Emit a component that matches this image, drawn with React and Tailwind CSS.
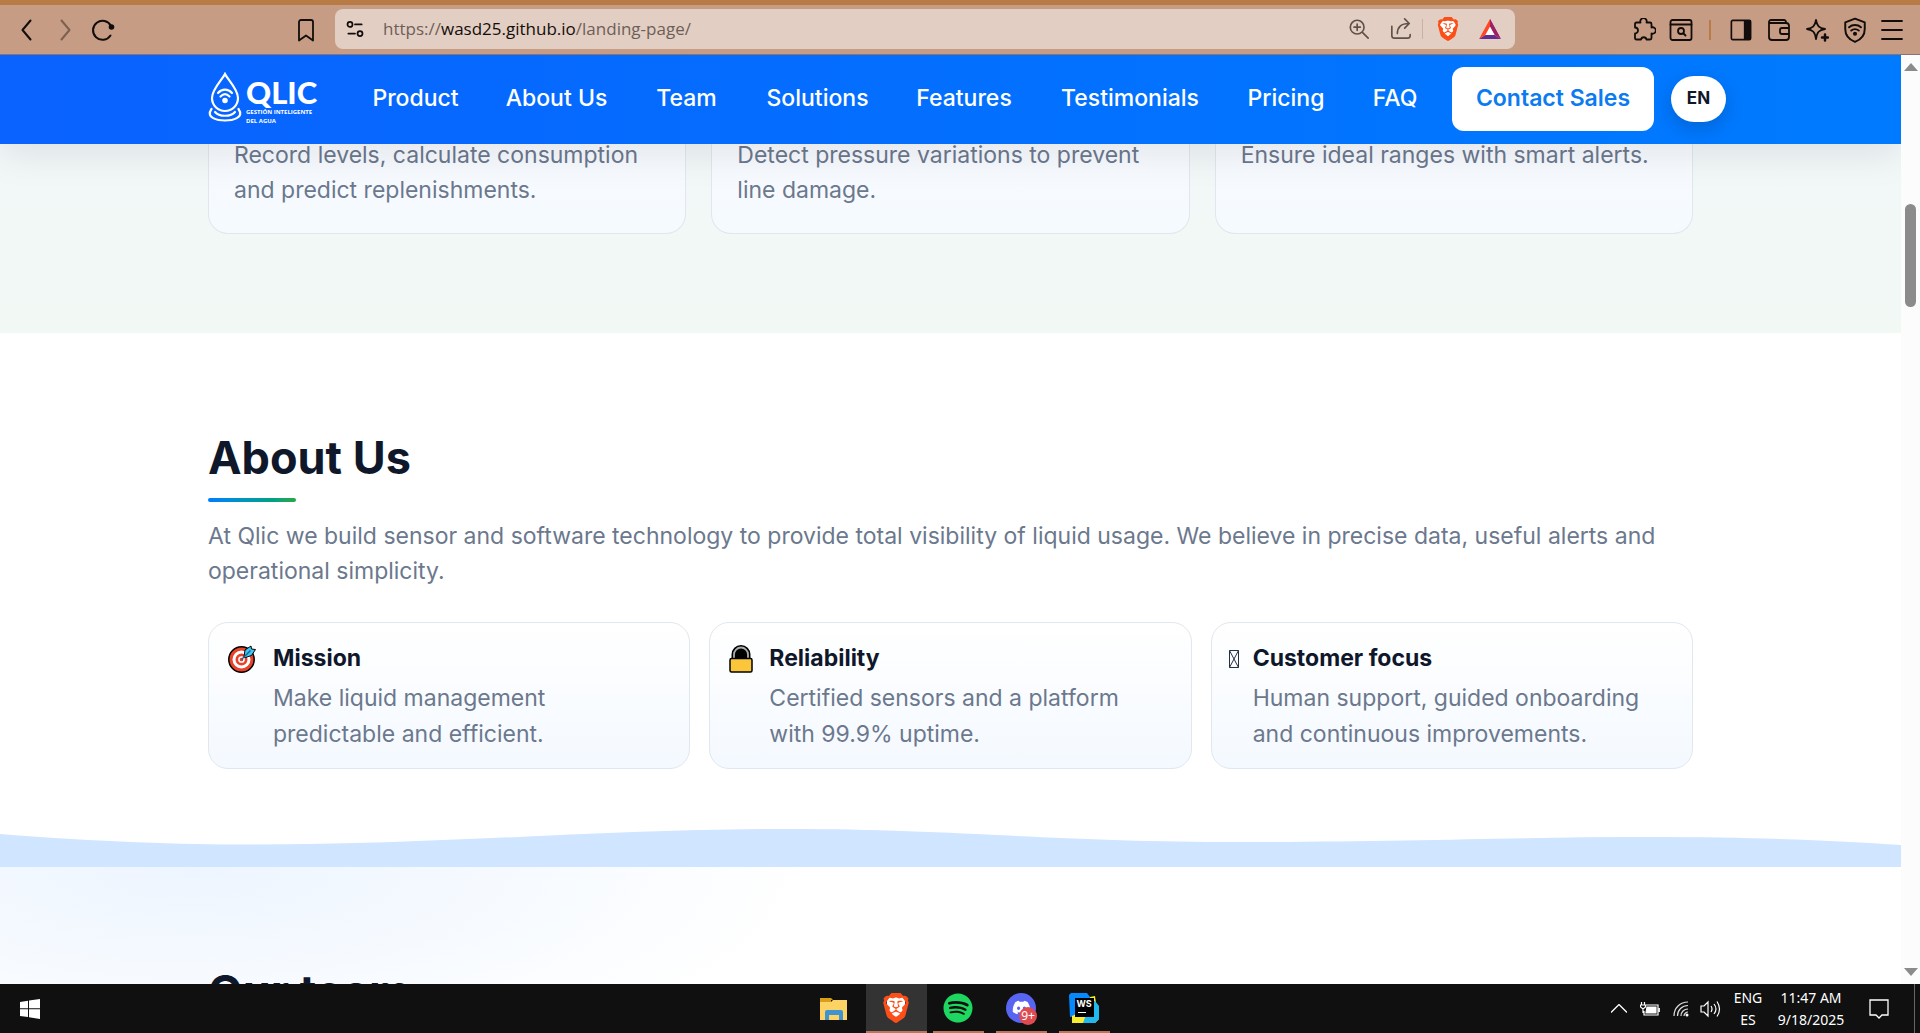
import React from "react";
import { SiBrave } from "react-icons/si";
import { FaSpotify, FaDiscord } from "react-icons/fa";

const navLinks = [
  ["Product", "w-[85px]"],
  ["About Us", "w-[97px]"],
  ["Team", "w-[63px]"],
  ["Solutions", "w-[99px]"],
  ["Features", "w-[94px]"],
  ["Testimonials", "w-[138px]"],
  ["Pricing", "w-[74px]"],
  ["FAQ", "w-[44px]"],
];

const sensorCards = [
  ["Record levels, calculate consumption", "and predict replenishments."],
  ["Detect pressure variations to prevent", "line damage."],
  ["Ensure ideal ranges with smart alerts.", ""],
];

function Stroke({ children, size = "size-6", label, width = 1.8 }) {
  return (
    <svg viewBox="0 0 24 24" className={size} fill="none" stroke="currentColor" strokeWidth={width} strokeLinecap="round" strokeLinejoin="round" aria-label={label}>
      {children}
    </svg>
  );
}

function IconButton({ label, className = "", children }) {
  return (
    <button type="button" aria-label={label} className={"flex h-10 items-center justify-center " + className}>
      {children}
    </button>
  );
}

function BraveLion({ className }) {
  return (
    <span className={"relative flex items-center justify-center text-[#fb4f1a] " + className}>
      <span className="absolute h-4/5 w-3/5 rounded-b-full bg-white" />
      <SiBrave className="relative size-full" />
    </span>
  );
}

function BrowserBar() {
  return (
    <div className="flex h-[55px] shrink-0 border-t-[5px] border-b border-t-[#b97b46] border-b-[#8b7277] bg-[#c69c85] text-[#120d0a]">
      <div className="flex w-[335px] shrink-0 items-center pl-2">
        <IconButton label="Back" className="w-[38px]"><Stroke width={2}><path d="M15.5 2.5 7.5 12l8 9.5" /></Stroke></IconButton>
        <IconButton label="Forward" className="w-[38px] text-[#7c6050]"><Stroke width={2}><path d="M8.5 2.5 16.5 12l-8 9.5" /></Stroke></IconButton>
        <IconButton label="Reload" className="w-[38px]">
          <Stroke width={2}><path d="M19.5 17.5A9.500 9.500 0 1 1 20 8" /><circle cx="20.500" cy="9" r="1.800" fill="currentColor" /></Stroke>
        </IconButton>
        <IconButton label="Bookmark this page" className="mr-2.5 ml-auto w-[38px]"><Stroke><path d="M5 4a2 2 0 0 1 2-2h10a2 2 0 0 1 2 2v18.500l-7-5-7 5Z" /></Stroke></IconButton>
      </div>
      <div className="mt-1 flex h-10 min-w-0 flex-1 items-center rounded-lg bg-[#e3cec3] pl-2">
        <IconButton label="Site information" className="w-6">
          <Stroke size="size-5" width={2.1}><circle cx="6" cy="6.500" r="3" /><path d="M12 6.500h8M4 17.500h8" /><circle cx="18" cy="17.500" r="3" /></Stroke>
        </IconButton>
        <input aria-label="Address" className="sr-only" defaultValue="https://wasd25.github.io/landing-page/" />
        <span className="ml-4 flex-1 truncate font-['Open_Sans',sans-serif] text-[17px] text-[#6d5f58]">https://<span className="text-[#120d0a]">wasd25.github.io</span>/landing-page/</span>
        <div className="flex items-center text-[#5f514a]">
          <IconButton label="Zoom" className="w-[42px]"><Stroke size="size-[22px]"><circle cx="10" cy="10" r="7.500" /><path d="m16 16 6 6M10 6.500v7M6.500 10h7" /></Stroke></IconButton>
          <IconButton label="Share" className="w-[42px]"><Stroke size="size-[22px]"><path d="M2 9v10a3 3 0 0 0 3 3h14a3 3 0 0 0 3-3v-1M8 17c0-7 4-11 13-11M16 1l5 5-5 5" /></Stroke></IconButton>
          <span className="h-5 w-px bg-[#c9b0a5]" />
          <IconButton label="Brave Shields" className="w-[49px]"><BraveLion className="size-[24px]" /></IconButton>
          <IconButton label="Brave Rewards" className="mr-2 w-[35px]">
            <svg viewBox="0 0 24 22" className="h-5 w-[22px]"><path d="M12 0 24 22 12 8Z" fill="#9e1f63" /><path d="M12 0 0 22l7-4.500 5-9Z" fill="#ff4724" /><path d="M0 22h24l-7-4.500H7Z" fill="#662d91" /><path d="M12 0v8.500l5 9 7 4.500Z" fill="#9e1f63" /><path d="m12 8.500 5 9H7Z" fill="#fff" /></svg>
          </IconButton>
        </div>
      </div>
      <div className="flex w-[405px] shrink-0 items-center justify-end pr-2.5">
        <IconButton label="Extensions" className="w-[37px]"><Stroke><path d="M3 6q0-1.500 1.500-1.500H8.500a3.200 3.200 0 1 1 6 0H18q1.500 0 1.500 1.500v3.500a3.200 3.200 0 1 1 0 6V20q0 1.500-1.500 1.500h-3.500a2.800 2.800 0 0 0-5.500 0H4.500Q3 21.500 3 20v-4.500a3 3 0 0 0 0-6Z" /></Stroke></IconButton>
        <IconButton label="Search tabs" className="w-[37px]"><Stroke><rect x="1.500" y="2" width="21" height="20" rx="2" /><path d="M1.500 6.500h21M14.500 15.500l2 2" /><circle cx="12" cy="13" r="3" /></Stroke></IconButton>
        <span className="mr-[11px] ml-2.5 h-5 w-0.5 bg-[#b97b46]" />
        <IconButton label="Sidebar" className="w-[38px]"><Stroke size="size-[22px]"><rect x="1.500" y="1.500" width="21" height="21" rx="1.500" /><path d="M16 2h6v20h-6Z" fill="currentColor" /></Stroke></IconButton>
        <IconButton label="Wallet" className="w-[38px]"><Stroke><path d="M19 5V4a2 2 0 0 0-2-2H4a2 2 0 0 0-2 2v15a3 3 0 0 0 3 3h14a3 3 0 0 0 3-3V8a3 3 0 0 0-3-3H3M22 10h-7a2 2 0 0 0-2 2v2a2 2 0 0 0 2 2h7" /></Stroke></IconButton>
        <IconButton label="Leo AI" className="w-[38px]"><Stroke><path d="M11 2c1 6 3 8 9 9-6 1-8 3-9 10-1-7-3-9-9-10 6-1 8-3 9-9Z" /><path d="M20 16.500v6M17 19.500h6" strokeWidth="2.500" /></Stroke></IconButton>
        <IconButton label="VPN" className="w-[38px]"><Stroke size="size-[26px]"><path d="M12 1.500 21 5v6c0 6-4 10-9 12-5-2-9-6-9-12V5Z" /><path d="M6.500 9.500c3-2.700 8-2.700 11 0M8.500 12.500c2-1.700 5-1.700 7 0" /><circle cx="12" cy="15.500" r="1" fill="currentColor" /></Stroke></IconButton>
        <IconButton label="Menu" className="w-[36px]"><Stroke><path d="M2 3h20M2 12h20M2 21h20" /></Stroke></IconButton>
      </div>
    </div>
  );
}

function Logo() {
  return (
    <a href="#home" className="flex w-[110px] shrink-0 items-start" aria-label="Qlic">
      <svg viewBox="0 0 34 50" className="h-[50px] w-[34px] shrink-0" fill="none" stroke="#fff" strokeWidth="2.200" strokeLinecap="round">
        <path d="M17 2C14 8 4 17 4 26a13 13 0 0 0 26 0C30 17 20 8 17 2Z" />
        <path d="M10 21c4-4.500 10-4.500 14 0M12.500 24.500c3-3 6-3 9 0" />
        <circle cx="17" cy="28.500" r="1.700" fill="#fff" />
        <path d="M3.500 37C-3 46 10 48.500 17 48.500s20-2.500 13.500-11.500M7 40c4 5 16 5 20 0" />
      </svg>
      <span className="flex flex-col pt-1 pl-1 text-white">
        <span className="font-['Lato',sans-serif] text-[31px] leading-8 font-black">QLIC</span>
        <span className="font-['Open_Sans',sans-serif] text-[6px] leading-[9px] font-bold whitespace-nowrap">GESTIÓN INTELIGENTE<br />DEL AGUA</span>
      </span>
    </a>
  );
}

function SiteHeader() {
  return (
    <header className="relative z-10 h-[89px] shrink-0 bg-linear-to-r from-[#0a62ff] to-[#007bff] pb-0.5 shadow-[0_8px_40px_rgba(15,23,42,0.1)]">
      <div className="mx-auto flex h-full max-w-[1485px] items-center">
        <Logo />
        <nav className="ml-[55px] flex shrink-0 items-center gap-[50px] text-[23px] font-medium text-white">
          {navLinks.map(([name, width]) => (
            <a key={name} href="#section" className={"flex justify-center whitespace-nowrap " + width}>{name}</a>
          ))}
        </nav>
        <a href="#contact" className="ml-[35px] flex h-16 w-[202px] shrink-0 items-center justify-center rounded-xl bg-white text-[23px] font-semibold whitespace-nowrap text-[#0b7bef]">Contact Sales</a>
        <button type="button" className="ml-[17px] h-[46px] w-[55px] shrink-0 rounded-full bg-white text-[17px] font-bold text-[#0f172a] shadow-[0_6px_18px_rgba(15,23,42,0.2)]">EN</button>
      </div>
    </header>
  );
}

function TargetIcon() {
  return (
    <svg viewBox="0 0 28 28" className="size-7">
      <circle cx="13.500" cy="14.500" r="12.700" fill="#e8432a" stroke="#000" strokeWidth="1.500" />
      <circle cx="13.500" cy="14.500" r="7.500" fill="none" stroke="#fff" strokeWidth="3" />
      <circle cx="13.500" cy="14.500" r="2.600" fill="none" stroke="#fff" strokeWidth="1.500" />
      <path d="m16 12 1-7 6-4 .5 3 4 .5-4 6-6 2Z" fill="#3bc8f5" stroke="#000" strokeWidth="1" />
      <path d="m13.500 14.500 9-9" stroke="#1d6091" strokeWidth="1.500" />
    </svg>
  );
}

function LockIcon() {
  return (
    <svg viewBox="0 0 24 28" className="h-7 w-6">
      <path d="M3.500 14V9.500a8.500 8.500 0 0 1 17 0V14Z" fill="#000" stroke="#000" strokeWidth="2" />
      <path d="M5 14V9.500a7 7 0 0 1 14 0V14" fill="none" stroke="#a9adb0" strokeWidth="1.800" />
      <rect x="1" y="13.500" width="22" height="13.500" rx="1.500" fill="#fcc63a" stroke="#000" strokeWidth="1.500" />
    </svg>
  );
}

function MissingGlyph() {
  return (
    <svg viewBox="0 0 10 18" className="h-[18px] w-2.5" fill="none" stroke="#26303f" strokeWidth="1">
      <path d="M.5.500h9v17h-9ZM.5.500l9 17M9.500.500l-9 17" />
    </svg>
  );
}

const values = [
  { title: "Mission", lines: ["Make liquid management", "predictable and efficient."], icon: <TargetIcon />, inset: "gap-[17px] pl-[19px]" },
  { title: "Reliability", lines: ["Certified sensors and a platform", "with 99.9% uptime."], icon: <LockIcon />, inset: "gap-4 pl-[19px]" },
  { title: "Customer focus", lines: ["Human support, guided onboarding", "and continuous improvements."], icon: <MissingGlyph />, inset: "gap-[14px] pl-[17px]" },
];

function Page() {
  return (
    <main className="flex min-w-0 flex-1 flex-col overflow-hidden bg-white font-['Inter',sans-serif] text-[#0f172a]">
      <SiteHeader />
      <section className="-mt-2 bg-linear-to-b from-[#f2f8f8] to-[#f2f8f4] pb-[99px]">
        <div className="mx-auto grid max-w-[1485px] grid-cols-3 gap-[25px]">
          {sensorCards.map(([a, b]) => (
            <article key={a} className="h-[98px] rounded-b-[20px] border border-t-0 border-[#e0e7ee] bg-linear-to-b from-[#f8fbff] to-[#f5faff] pt-0.5 pl-[25px] text-[23px] leading-[35px] whitespace-nowrap text-[#6b788d]">
              {a}<br />{b}
            </article>
          ))}
        </div>
      </section>
      <section className="bg-white pt-[98px]">
        <div className="mx-auto max-w-[1485px]">
          <h2 className="text-[45px] leading-[54px] font-bold">About Us</h2>
          <div className="mt-[13px] h-1 w-[88px] rounded-full bg-linear-to-r from-[#007bff] to-[#28a745]" />
          <p className="mt-[17px] text-[23px] leading-[35px] text-[#6b788d]">At Qlic we build sensor and software technology to provide total visibility of liquid usage. We believe in precise data, useful alerts and operational simplicity.</p>
          <div className="mt-[33px] grid grid-cols-3 gap-[19px]">
            {values.map((v) => (
              <article key={v.title} className={"flex h-[147px] rounded-[20px] border border-[#e0e7ee] bg-linear-to-b from-white to-[#f4f9ff] pt-[15px] " + v.inset}>
                <span className="flex h-[42px] shrink-0 items-center">{v.icon}</span>
                <div className="whitespace-nowrap">
                  <h3 className="mb-0.5 text-[23px] leading-[40px] font-bold">{v.title}</h3>
                  <p className="text-[23px] leading-9 text-[#6b788d]">{v.lines[0]}<br />{v.lines[1]}</p>
                </div>
              </article>
            ))}
          </div>
        </div>
        <svg viewBox="0 0 1901 40" preserveAspectRatio="none" className="mt-[58px] block h-10 w-full" fill="#d0e5ff">
          <path d="M0 7C100 15 180 17.500 250 17.500C450 17.500 600 2 790 2C950 2 1060 15 1240 15C1400 15 1520 10 1650 10C1760 10 1840 14 1901 18V40H0Z" />
        </svg>
      </section>
      <section className="min-h-0 flex-1 overflow-hidden bg-[radial-gradient(ellipse_620px_210px_at_190px_0px,#edf5ff,#ffffff)] pt-[98px]">
        <div className="mx-auto max-w-[1485px]">
          <h2 className="text-[45px] leading-[54px] font-bold">Our team</h2>
        </div>
      </section>
    </main>
  );
}

function ScrollBar() {
  return (
    <div className="flex w-[19px] shrink-0 flex-col items-center bg-[#fcfcfc] py-2 text-[#8b8b8b]">
      <svg viewBox="0 0 14 8" className="h-2 w-[14px]" fill="currentColor"><path d="M0 8 7 0l7 8Z" /></svg>
      <div className="mt-[133px] h-[103px] w-[11px] rounded-full bg-[#8b8b8b]" />
      <svg viewBox="0 0 14 8" className="mt-auto h-2 w-[14px]" fill="currentColor"><path d="M0 0h14L7 8Z" /></svg>
    </div>
  );
}

function TaskApp({ label, active, className = "w-[51px] border-b-2 border-[#b97658]", children }) {
  return (
    <button type="button" aria-label={label} className={"flex items-center justify-center " + (active ? "w-[61px] border-b-2 border-[#b97658] bg-[#333333]" : className)}>
      {children}
    </button>
  );
}

function TaskBar() {
  return (
    <footer className="grid h-[49px] shrink-0 grid-cols-[1fr_auto_1fr] bg-[#101010] font-['Noto_Sans',sans-serif] text-white">
      <button type="button" aria-label="Start" className="flex w-[60px] items-center justify-center">
        <svg viewBox="0 0 20 20" className="size-5" fill="#fff"><path d="M0 3 8 1.700v7.500H0ZM9 1.500 20 0v9.200H9ZM0 10.200h8v7.900L0 17ZM9 10.200h11V20L9 18.300Z" /></svg>
      </button>
      <div className="flex gap-[6px] pr-0.5">
        <TaskApp label="File Explorer" className="w-[51px]">
          <svg viewBox="0 0 28 24" className="h-6 w-7"><path d="M0 1h11l2 2h-2v4H0Z" fill="#d9a016" /><path d="M0 5h11l2-2h14v20H0Z" fill="#fdd365" /><path d="M5 23v-8q0-2 2-2h14q2 0 2 2v8h-4v-5H9v5Z" fill="#3f93cf" /></svg>
        </TaskApp>
        <TaskApp label="Brave" active><BraveLion className="size-[30px]" /></TaskApp>
        <TaskApp label="Spotify"><FaSpotify className="size-[30px] text-[#1ed760]" /></TaskApp>
        <div className="w-0" />
        <TaskApp label="Discord">
          <span className="relative flex size-[30px] items-center justify-center rounded-full bg-[#5865f2]"><FaDiscord className="size-[19px]" /><span className="absolute -right-px -bottom-0.5 flex size-[18px] items-center justify-center rounded-full bg-[#df4b50] text-[12px] leading-none">9+</span></span>
        </TaskApp>
        <div className="w-0" />
        <TaskApp label="WebStorm">
          <span className="relative flex size-[30px] items-center justify-center">
            <svg viewBox="0 0 30 30" className="absolute size-full"><path d="M2 0h16l3 4-6 18L1 24 0 2Z" fill="#0789fe" /><path d="m21 4 5-1 1 7 3 4v12l-4 4H3l0-7 15-7Z" fill="#f9ed32" /><path d="m26 8 4 5v13l-4 4H14l8-22Z" fill="#20b9ef" /></svg>
            <span className="relative flex h-[19px] w-[19px] flex-col items-center bg-black font-['Inter',sans-serif] text-[9px] leading-3 font-bold">WS<span className="mt-0.5 mr-1 h-px w-2 bg-white" /></span>
          </span>
        </TaskApp>
      </div>
      <div className="flex items-center justify-end">
        <button type="button" aria-label="Show hidden icons" className="flex w-[30px] justify-center"><svg viewBox="0 0 16 9" className="h-[9px] w-4" fill="none" stroke="#fff" strokeWidth="1.300"><path d="m0 8.500 8-8 8 8" /></svg></button>
        <button type="button" aria-label="Battery" className="flex w-[31px] justify-center"><svg viewBox="0 0 20 14" className="h-[14px] w-5" fill="none" stroke="#fff" strokeWidth="1.200"><path d="M6 3h12v10H4V9M19.300 6v4M1.500 0v3M4.500 0v3M.5 3h5v2L3 7 .5 5ZM3 7v4" /><path d="M7 5h9v6H6Z" fill="#fff" /></svg></button>
        <button type="button" aria-label="Network" className="flex w-[31px] justify-center"><svg viewBox="0 0 16 16" className="size-4" fill="none" stroke="#ddd" strokeWidth="1.200"><path d="M1 15C1 7 7 1 15 1M4.500 15C4.500 9 9 4.500 15 4.500M8 15c0-4 3-7 7-7M11 15c0-2 2-4 4-4" /><circle cx="14" cy="14" r="1.500" fill="#fff" stroke="none" /></svg></button>
        <button type="button" aria-label="Volume" className="flex w-[29px] justify-center"><svg viewBox="0 0 21 18" className="h-[18px] w-[21px]" fill="none" stroke="#fff" strokeWidth="1.200"><path d="M1 6h3l4-4v14l-4-4H1ZM11 6q2 3 0 6M14 4q4 5 0 10M17 1.500q5 7.500 0 15" /></svg></button>
        <button type="button" className="w-[46px] text-[14px] leading-[22px]">ENG<br />ES</button>
        <button type="button" className="w-[80px] text-[14px] leading-[22px] whitespace-nowrap">11:47 AM<br />9/18/2025</button>
        <button type="button" aria-label="Notifications" className="flex w-[56px] justify-center"><svg viewBox="0 0 20 20" className="size-5" fill="none" stroke="#fff" strokeWidth="1.300"><path d="M1 1h18v15h-6l-3 3-3-3H1Z" /></svg></button>
        <span className="mr-[5px] ml-[7px] h-full w-px bg-[#666]" />
      </div>
    </footer>
  );
}

export default function App() {
  return (
    <div className="flex h-screen flex-col overflow-hidden">
      <BrowserBar />
      <div className="flex min-h-0 flex-1">
        <Page />
        <ScrollBar />
      </div>
      <TaskBar />
    </div>
  );
}
